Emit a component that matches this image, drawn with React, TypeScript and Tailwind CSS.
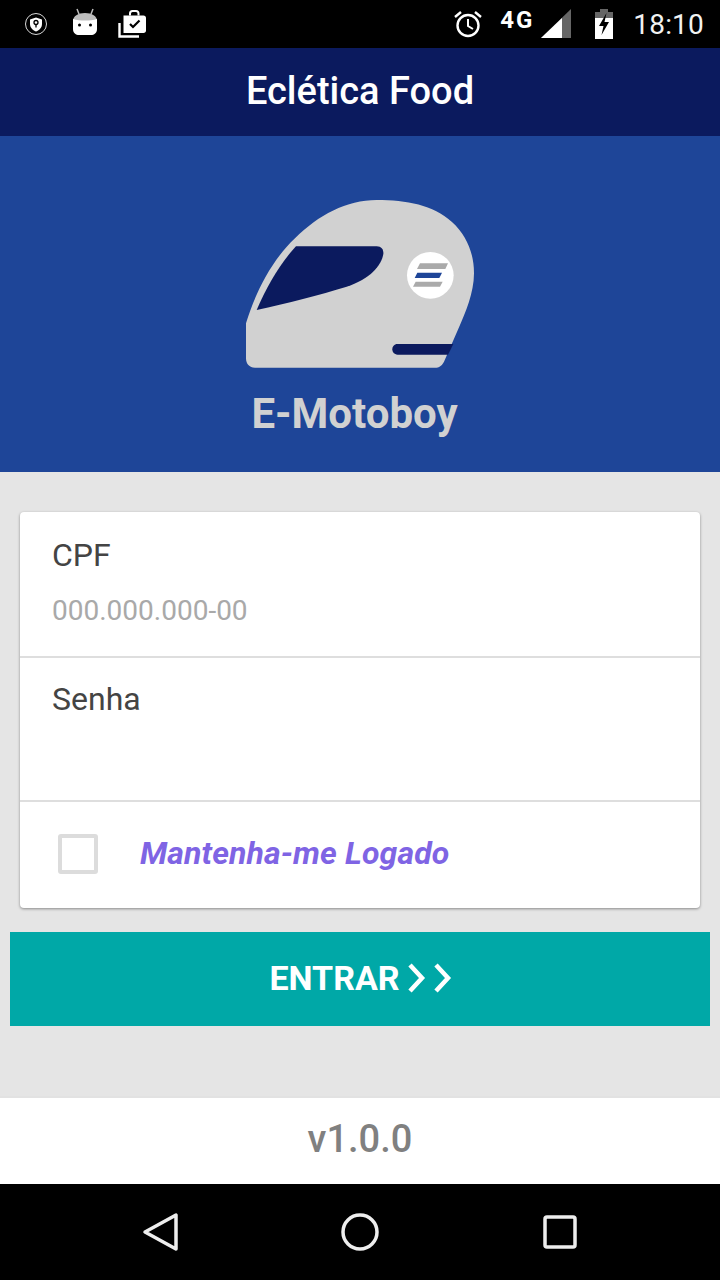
function StatusBar() {
  return (
    <div className="flex h-12 shrink-0 items-center bg-black text-white">
      <div className="ml-[24px] flex items-center">
        {/* shield badge */}
        <svg width="24" height="24" viewBox="0 0 24 24">
          <circle cx="12" cy="12" r="10.500" fill="none" stroke="#d8d8d8" strokeWidth="1" />
          <path d="M12 5.500 L18 7.500 V12 C18 15.500 15.500 18 12 19.500 C8.500 18 6 15.500 6 12 V7.500 Z" fill="#fff" />
          <circle cx="12" cy="10.500" r="2" fill="none" stroke="#000" strokeWidth="1.300" />
          <path d="M12 12.500 V15.500" stroke="#000" strokeWidth="1.300" />
        </svg>
        {/* android head */}
        <svg className="mb-[2px] ml-[24px]" width="26" height="30" viewBox="0 0 26 30">
          <path d="M5 1 L7 6 M21 1 L19 6" stroke="#bdbdbd" strokeWidth="1.500" />
          <path d="M1 13 C1 8 6 5 13 5 C20 5 25 8 25 13 Z" fill="#bdbdbd" />
          <path d="M1 11 C8 13 18 13 25 11 V21 C25 25 22 27 19 27 H7 C4 27 1 25 1 21 Z" fill="#fff" />
          <circle cx="7.500" cy="17" r="1.500" fill="#000" />
          <circle cx="18.500" cy="17" r="1.500" fill="#000" />
        </svg>
        {/* task bag */}
        <svg className="ml-[20px]" width="30" height="30" viewBox="0 0 30 30">
          <path d="M1.500 14 V27.500 H21" fill="none" stroke="#fff" strokeWidth="2.400" />
          <path d="M5.500 6.500 H25.500 C27 6.500 28 7.500 28 9 V21.500 C28 23 27 24 25.500 24 H5.500 Z" fill="#fff" />
          <path d="M12 6.500 V4.500 C12 3 13 2 14.500 2 H18 C19.500 2 20.500 3 20.500 4.500 V6.500" fill="none" stroke="#fff" strokeWidth="2" />
          <path d="M12 15 L15 18 L21.500 11.500" fill="none" stroke="#000" strokeWidth="2.200" />
        </svg>
      </div>
      <div className="ml-auto flex items-center">
        {/* alarm clock */}
        <svg width="30" height="30" viewBox="0 0 30 30">
          <circle cx="15" cy="16.500" r="10.500" fill="none" stroke="#fff" strokeWidth="2.400" />
          <path d="M15 10 V17 L20 20" fill="none" stroke="#fff" strokeWidth="2" />
          <path d="M2 8 L8 3 M28 8 L22 3" stroke="#fff" strokeWidth="2.400" />
        </svg>
        <span className="mb-[8px] ml-[17px] font-['Roboto',sans-serif] text-[24px] leading-[26px] font-bold tracking-[2px]">4G</span>
        {/* signal */}
        <svg className="ml-[6px]" width="32" height="30" viewBox="0 0 32 30">
          <path d="M1 29 L31 0 V29 Z" fill="#666" />
          <path d="M1 29 L22 9 V29 Z" fill="#fff" />
        </svg>
        {/* battery */}
        <svg className="ml-[21px]" width="22" height="32" viewBox="0 0 22 32">
          <path d="M7 1 H15 V4 H20 V14 H2 V4 H7 Z" fill="#666" />
          <path d="M2 10 H20 V31 H2 Z" fill="#fff" />
          <path d="M13.500 5 L6 18 H10.500 L8.500 27 L16 14 H11.500 Z" fill="#000" />
        </svg>
        <span className="mt-[2px] mr-[16px] ml-[18px] font-['Roboto',sans-serif] text-[28px] leading-[32px] tracking-[0.2px] text-[#f2f2f2]">18:10</span>
      </div>
    </div>
  );
}

function Helmet() {
  return (
    <svg width="228" height="168" viewBox="48 30 684 504">
      <path
        d="M48 400 C75 310 125 210 195 145 C265 75 350 30 440 30 C530 30 610 45 665 95 C710 135 732 190 732 250 C732 310 705 370 690 405 L642 515 C635 527 628 533 615 533 H75 C58 533 48 522 48 505 Z"
        fill="#d1d1d1"
      />
      <path
        d="M198 169 H440 C455 169 461 180 460 192 C455 225 420 268 350 290 C270 315 170 340 80 360 C110 290 150 220 198 169 Z"
        fill="#0b1a5e"
      />
      <path d="M503 462 H670 L654 494 H503 C492 494 487 486 487 478 C487 470 492 462 503 462 Z" fill="#0b1a5e" />
      <circle cx="601" cy="256" r="70" fill="#fff" />
      <path d="M570 220 H654 L646 237 H561 Z" fill="#aaaaaa" />
      <path d="M562 248 H636 L628 264 H554 Z" fill="#1e4598" />
      <path d="M557 275 H638 L630 290 H549 Z" fill="#aaaaaa" />
    </svg>
  );
}

export default function App() {
  return (
    <div className="flex h-[1280px] w-[720px] flex-col overflow-hidden bg-[#e5e5e5] font-['Roboto',sans-serif]">
      <StatusBar />

      <header className="flex h-[88px] shrink-0 items-center justify-center bg-[#0b1a5e] pb-[2px]">
        <h1 className="text-[38px] font-medium text-white">Eclética Food</h1>
      </header>

      <div className="flex h-[336px] shrink-0 flex-col items-center bg-[#1e4598] pt-[64px]">
        <Helmet />
        <p className="mt-[17px] pr-[11px] text-[42px] leading-[58px] font-bold text-[#d1d1d1]">E-Motoboy</p>
      </div>

      <div className="mx-[20px] mt-[40px] h-[396px] shrink-0 rounded-[4px] bg-white shadow-[0_1px_3px_rgba(0,0,0,0.4)]">
        <div className="h-[146px] border-b-2 border-[#dedede] pt-[24px] pl-[32px]">
          <p className="text-[32px] leading-[38px] text-[#444444]">CPF</p>
          <p className="mt-[20px] text-[28px] leading-[34px] text-[#a9a9a9]">000.000.000-00</p>
        </div>
        <div className="h-[144px] border-b-2 border-[#dedede] pt-[22px] pl-[32px]">
          <p className="text-[32px] leading-[38px] text-[#444444]">Senha</p>
        </div>
        <div className="flex h-[106px] items-center pb-[2px] pl-[38px]">
          <div className="h-[40px] w-[40px] rounded-[3px] border-[4px] border-[#dcdcdc]" />
          <span className="mb-[2px] ml-[42px] text-[32px] font-bold tracking-[0.12px] text-[#7f64e4] italic">Mantenha-me Logado</span>
        </div>
      </div>

      <button className="mx-[10px] mt-[24px] flex h-[94px] shrink-0 items-center justify-center bg-[#00a8a7] pb-[2px] pl-[2px] text-[34px] font-bold text-white">
        ENTRAR
        <svg className="ml-[7px]" width="46" height="30" viewBox="0 0 46 30">
          <path d="M3 2 L15 15 L3 28 M29 2 L41 15 L29 28" fill="none" stroke="#fff" strokeWidth="4.500" />
        </svg>
      </button>

      <footer className="mt-[70px] flex h-[88px] shrink-0 items-center justify-center border-t-2 border-[#e2e2e2] bg-white pb-[4px] text-[38px] font-medium text-[#808080]">
        v1.0.0
      </footer>

      <nav className="flex h-[96px] shrink-0 items-center justify-between bg-black px-[140px]">
        <svg width="40" height="40" viewBox="0 0 40 40">
          <path d="M36 3 V37 L5 20 Z" fill="none" stroke="#eeeeee" strokeWidth="3.500" strokeLinejoin="round" />
        </svg>
        <svg width="40" height="40" viewBox="0 0 40 40">
          <circle cx="20" cy="20" r="17" fill="none" stroke="#eeeeee" strokeWidth="3.500" />
        </svg>
        <svg width="40" height="40" viewBox="0 0 40 40">
          <rect x="5" y="5" width="30" height="30" rx="2" fill="none" stroke="#eeeeee" strokeWidth="3.500" />
        </svg>
      </nav>
    </div>
  );
}
